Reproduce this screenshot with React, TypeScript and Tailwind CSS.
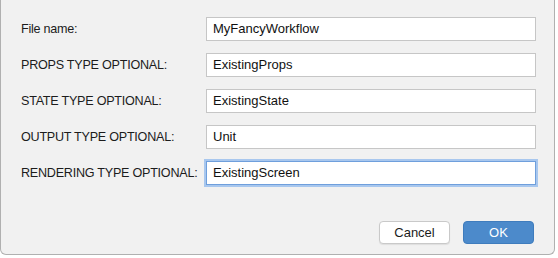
import React from "react";

const rows = [
  { label: "File name:", value: "MyFancyWorkflow" },
  { label: "PROPS TYPE OPTIONAL:", value: "ExistingProps" },
  { label: "STATE TYPE OPTIONAL:", value: "ExistingState" },
  { label: "OUTPUT TYPE OPTIONAL:", value: "Unit" },
  { label: "RENDERING TYPE OPTIONAL:", value: "ExistingScreen", focused: true },
];

export default function App() {
  return (
    <div
      className="w-[558px] h-[258px] bg-white"
      style={{ fontFamily: '"Liberation Sans", Arial, sans-serif' }}
    >
      <div className="w-[555px] h-[255px] bg-[#f1f1f1] border-x border-b border-[#b0b0b0] rounded-b-[6px] flex flex-col pt-[17px] pl-[20px] pr-[17px]">
        <div className="grid grid-cols-[185px_330px] gap-y-[12px] items-center">
          {rows.map((r) => (
            <React.Fragment key={r.label}>
              <div className="text-[12.6px] tracking-[-0.25px] text-[#1c1c1c] leading-none whitespace-nowrap">
                {r.label}
              </div>
              <div
                className={
                  r.focused
                    ? "h-[24px] bg-white border border-[#6f9fdc] shadow-[0_0_0_2px_#a8c7ee] flex items-center px-[6px] text-[13px] text-[#111]"
                    : "h-[24px] bg-white border border-[#c6c6c6] flex items-center px-[6px] text-[13px] text-[#111]"
                }
              >
                {r.value}
              </div>
            </React.Fragment>
          ))}
        </div>
        <div className="flex justify-end gap-[13px] mt-[36px] pr-[3px]">
          <button className="w-[71px] h-[23px] bg-white border border-[#c9c9c9] rounded-[4px] shadow-[0_1px_1px_rgba(0,0,0,0.08)] text-[13px] text-[#1c1c1c] flex items-center justify-center">
            Cancel
          </button>
          <button className="w-[71px] h-[23px] bg-[#4c8acb] border border-[#3f7cbd] rounded-[4px] text-[13px] text-white flex items-center justify-center">
            OK
          </button>
        </div>
      </div>
    </div>
  );
}
